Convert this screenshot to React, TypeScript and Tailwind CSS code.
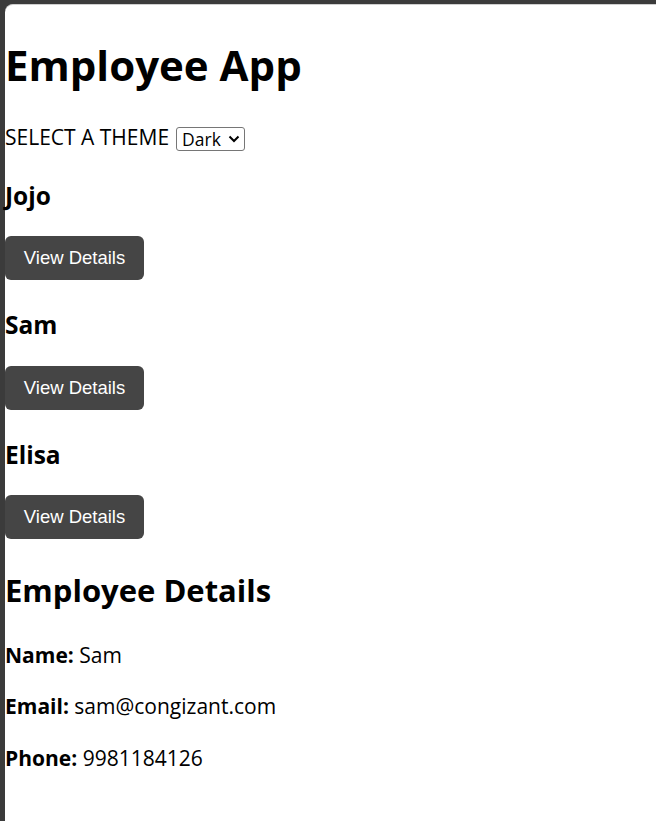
import React, { useState } from 'react';

type Employee = {
  id: number;
  name: string;
  email: string;
  phone: string;
};

const employees: Employee[] = [
  { id: 1, name: 'Jojo', email: 'jojo@congizant.com', phone: '9876543210' },
  { id: 2, name: 'Sam', email: 'sam@congizant.com', phone: '9981184126' },
  { id: 3, name: 'Elisa', email: 'elisa@congizant.com', phone: '9123456780' },
];

function App() {
  const [theme, setTheme] = useState('Dark');
  const [selected, setSelected] = useState<Employee | null>(employees[1]);

  return (
    <div className="h-screen bg-[#3b3b3b] pt-[4px] pl-[5px] font-['Open_Sans',sans-serif] text-black">
      <div className="h-full rounded-tl-[8px] border-t border-[#cfcfcf] bg-white">
        <h1 className="mt-[32px] text-[42px] font-bold leading-[56px]">Employee App</h1>

        <div className="mt-[28px] flex h-[32px] items-end text-[21px] leading-[32px]">
          <span className="self-start">SELECT A THEME</span>
          <div className="relative mb-[2px] ml-[7px]">
            <select
              value={theme}
              onChange={(e) => setTheme(e.target.value)}
              className="block h-[24px] w-[69px] appearance-none rounded-[3px] border border-[#767676] bg-white pl-[5px] text-[17.5px] leading-[22px] outline-none"
            >
              <option>Dark</option>
              <option>Light</option>
            </select>
            <svg
              className="pointer-events-none absolute right-[5px] top-[8px]"
              width="12"
              height="8"
              viewBox="0 0 12 8"
              fill="none"
              stroke="black"
              strokeWidth="2"
            >
              <path d="M1.5 1.5 L6 6 L10.5 1.5" />
            </svg>
          </div>
        </div>

        {employees.map((emp, i) => (
          <div key={emp.id}>
            <h3 className={`${i === 0 ? 'mt-[27px]' : 'mt-[29px]'} text-[24.5px] font-bold leading-[32px]`}>
              {emp.name}
            </h3>
            <button
              onClick={() => setSelected(emp)}
              className={`${i === 1 ? 'mt-[25px]' : 'mt-[24px]'} flex h-[44px] w-[139px] items-center justify-center rounded-[6px] bg-[#454545] font-['Liberation_Sans',Arial,sans-serif] text-[18.5px] text-white`}
            >
              View Details
            </button>
          </div>
        ))}

        {selected && (
          <div>
            <h2 className="mt-[29px] text-[31px] font-bold leading-[44px]">Employee Details</h2>
            <p className="mt-[27px] text-[21px] leading-[32px]">
              <b>Name:</b> {selected.name}
            </p>
            <p className="mt-[19px] text-[21px] leading-[32px]">
              <b>Email:</b> {selected.email}
            </p>
            <p className="mt-[20px] text-[21px] leading-[32px]">
              <b>Phone:</b> {selected.phone}
            </p>
          </div>
        )}
      </div>
    </div>
  );
}

export default App;
